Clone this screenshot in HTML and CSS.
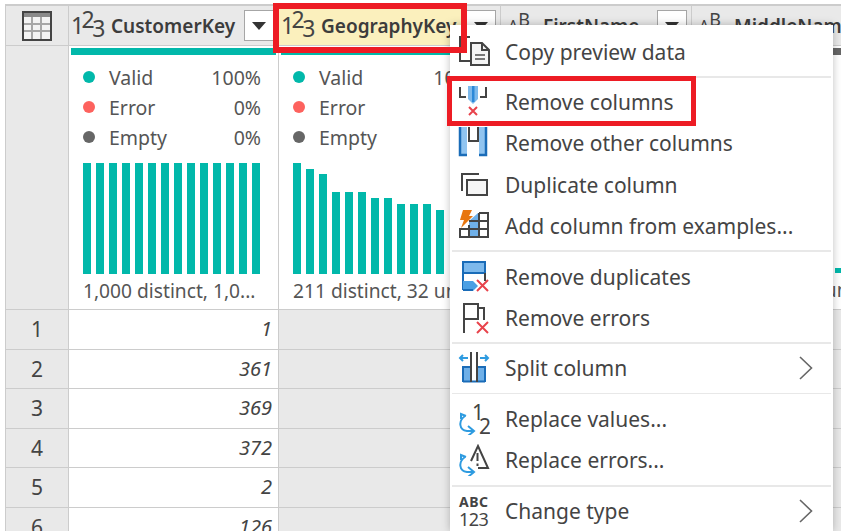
FILE: index.html
```html
<!DOCTYPE html>
<html>
<head>
  <meta charset="utf-8">
  <title>Remove columns</title>
  <link rel="stylesheet" href="styles.css">
</head>
<body>
  <div class="grid">
    <!-- Kopfzeile -->
    <div class="row head">
      <div class="index">
        <svg class="table-icon" width="32" height="32" viewBox="0 0 32 32">
          <rect x="2" y="2" width="28" height="28" fill="#f4f4f4" stroke="#444" stroke-width="2"/>
          <rect x="3" y="3" width="26" height="4" fill="#8a8a8a"/>
          <path d="M3 14H29M3 21H29M11 7V29M20 7V29" stroke="#a8a8a8" stroke-width="2" fill="none"/>
        </svg>
      </div>
      <div class="cell col-a">
        <div class="label"><span class="type">1<sup>2</sup><sub>3</sub></span><span class="name">CustomerKey</span></div>
        <div class="drop"><i></i></div>
      </div>
      <div class="cell col-b">
        <div class="label picked"><span class="type">1<sup>2</sup><sub>3</sub></span><span class="name">GeographyKey</span></div>
        <div class="drop"><i></i></div>
      </div>
      <div class="cell col-c">
        <div class="label"><span class="type letters"><small>A</small><sup>B</sup></span><span class="name">FirstName</span></div>
        <div class="drop"><i></i></div>
      </div>
      <div class="cell col-d">
        <div class="label"><span class="type letters"><small>A</small><sup>B</sup></span><span class="name">MiddleName</span></div>
      </div>
    </div>

    <!-- Profil -->
    <div class="row profile">
      <div class="index"></div>
      <div class="cell col-a">
        <div class="quality"></div>
        <ul class="stats">
          <li><b class="dot valid"></b>Valid<span>100%</span></li>
          <li><b class="dot error"></b>Error<span>0%</span></li>
          <li><b class="dot empty"></b>Empty<span>0%</span></li>
        </ul>
        <div class="bars">
          <i></i><i></i><i></i><i></i><i></i><i></i><i></i><i></i><i></i><i></i><i></i><i></i><i></i><i></i>
        </div>
        <div class="distinct">1,000 distinct, 1,0...</div>
      </div>
      <div class="cell col-b">
        <div class="quality"></div>
        <ul class="stats">
          <li><b class="dot valid"></b>Valid<span>100%</span></li>
          <li><b class="dot error"></b>Error<span>0%</span></li>
          <li><b class="dot empty"></b>Empty<span>0%</span></li>
        </ul>
        <div class="bars">
          <i style="height:111px"></i><i style="height:105px"></i><i style="height:100px"></i><i style="height:82px"></i><i style="height:82px"></i><i style="height:82px"></i><i style="height:76px"></i><i style="height:76px"></i><i style="height:70px"></i><i style="height:70px"></i><i style="height:70px"></i><i style="height:64px"></i>
        </div>
        <div class="distinct">211 distinct, 32 unique</div>
      </div>
      <div class="cell col-c"></div>
      <div class="cell col-d">
        <div class="quality blank"></div>
        <div class="bars tail">
          <i></i><i></i><i></i><i></i><i></i><i></i><i></i><i></i><i></i><i></i><i></i>
        </div>
        <div class="distinct">11 distinct, 3 unique</div>
      </div>
    </div>

    <!-- Daten -->
    <div class="row data"><div class="index">1</div><div class="cell col-a">1</div><div class="cell col-b"></div><div class="cell col-c"></div><div class="cell col-d"></div></div>
    <div class="row data"><div class="index">2</div><div class="cell col-a">361</div><div class="cell col-b"></div><div class="cell col-c"></div><div class="cell col-d"></div></div>
    <div class="row data"><div class="index">3</div><div class="cell col-a">369</div><div class="cell col-b"></div><div class="cell col-c"></div><div class="cell col-d"></div></div>
    <div class="row data"><div class="index">4</div><div class="cell col-a">372</div><div class="cell col-b"></div><div class="cell col-c"></div><div class="cell col-d"></div></div>
    <div class="row data"><div class="index">5</div><div class="cell col-a">2</div><div class="cell col-b"></div><div class="cell col-c"></div><div class="cell col-d"></div></div>
    <div class="row data"><div class="index">6</div><div class="cell col-a">126</div><div class="cell col-b"></div><div class="cell col-c"></div><div class="cell col-d"></div></div>
  </div>

  <!-- Kontextmenue -->
  <div class="menu">
    <div class="item">
      <svg width="32" height="32" viewBox="0 0 32 32" fill="none" stroke="#444" stroke-width="2">
        <path d="M12 1H2V25H12"/>
        <path d="M13 7H24L31 14V29H13Z" fill="#f4f4f4"/>
        <path d="M24 7V14H31"/>
        <path d="M17 19H27M17 23H27" stroke="#777"/>
      </svg>
      Copy preview data
    </div>
    <div class="sep"></div>
    <div class="item">
      <svg width="32" height="32" viewBox="0 0 32 32" fill="none">
        <path d="M2 1V11H8M28 1V11H22" stroke="#444" stroke-width="2"/>
        <path d="M10 0H20V13L15 18L10 13Z" fill="#7db9ec"/>
        <path d="M14 0H16.5V16H14Z" fill="#2b88d8"/>
        <path d="M11 21L19 29M19 21L11 29" stroke="#e8434c" stroke-width="2"/>
      </svg>
      Remove columns
    </div>
    <div class="item">
      <svg width="32" height="32" viewBox="0 0 32 32" fill="none">
        <path d="M1 0H9V29H1Z" fill="#90c4f0"/>
        <path d="M21 0H29V29H21Z" fill="#90c4f0"/>
        <path d="M2 0V28H9M28 0V28H21" stroke="#1a6cb8" stroke-width="2.5"/>
        <path d="M11 0V14H20V0" stroke="#444" stroke-width="2"/>
      </svg>
      Remove other columns
    </div>
    <div class="item">
      <svg width="32" height="32" viewBox="0 0 32 32" fill="none" stroke="#444" stroke-width="2">
        <path d="M21 5H4V22"/>
        <rect x="9" y="11" width="20" height="15" fill="#f6f6f6"/>
      </svg>
      Duplicate column
    </div>
    <div class="item">
      <svg width="32" height="32" viewBox="0 0 32 32" fill="none">
        <path d="M11 11H20V28H11Z" fill="#6fb0e8"/>
        <path d="M20 3V11H11" fill="#6fb0e8"/>
        <path d="M21 3H30V27H2V19H30M30 11H11M11 28V15M21 3V28" stroke="#444" stroke-width="2"/>
        <path d="M5 0H14L11 6H15L3 18L6 10H2Z" fill="#e8760f"/>
      </svg>
      Add column from examples...
    </div>
    <div class="sep"></div>
    <div class="item">
      <svg width="32" height="32" viewBox="0 0 32 32" fill="none">
        <rect x="5" y="1" width="22" height="11" fill="#7db9ec" stroke="#1a6cb8" stroke-width="2"/>
        <path d="M5 12V29" stroke="#1a6cb8" stroke-width="2"/>
        <path d="M27 12V20" stroke="#444" stroke-width="2"/>
        <path d="M5 20H15L20 25L15 30H5Z" fill="#4b9fe3"/>
        <path d="M5 29H15" stroke="#1a6cb8" stroke-width="2"/>
        <path d="M19 19L30 30M30 19L19 30" stroke="#e8434c" stroke-width="2"/>
      </svg>
      Remove duplicates
    </div>
    <div class="item">
      <svg width="32" height="32" viewBox="0 0 32 32" fill="none">
        <path d="M6 31V2H20V17H6M20 6H26V18" stroke="#444" stroke-width="2"/>
        <path d="M19 20L30 31M30 20L19 31" stroke="#e8434c" stroke-width="2"/>
      </svg>
      Remove errors
    </div>
    <div class="sep"></div>
    <div class="item more">
      <svg width="32" height="32" viewBox="0 0 32 32" fill="none">
        <path d="M5 15H13V30H5Z M19 15H27V30H19Z" fill="#6fb0e8"/>
        <path d="M5 30V15H13M27 30V15H19M5 29.5H27" stroke="#1a6cb8" stroke-width="2"/>
        <path d="M13 0V30M19 0V30" stroke="#444" stroke-width="2"/>
        <path d="M10 6H2M5 3L2 6L5 9M22 6H30M27 3L30 6L27 9" stroke="#2e9be0" stroke-width="2"/>
      </svg>
      Split column
      <svg class="chevron" width="14" height="24" viewBox="0 0 14 24" fill="none"><path d="M1 1L12.5 12L1 23" stroke="#666" stroke-width="1.6"/></svg>
    </div>
    <div class="sep thin"></div>
    <div class="item">
      <svg width="32" height="32" viewBox="0 0 32 32" fill="none">
        <text x="14" y="17" class="ico-num">1</text>
        <text x="21" y="31" class="ico-num">2</text>
        <path d="M7 13C0 18 1 27 9 28H15M10 23L16 28L10 33M3 16L3 11L8 13" stroke="#2e9be0" stroke-width="2"/>
      </svg>
      Replace values...
    </div>
    <div class="item">
      <svg width="32" height="32" viewBox="0 0 32 32" fill="none">
        <path d="M13 17L20 2L30 24H20" stroke="#444" stroke-width="2"/>
        <path d="M19.5 9V17M19.5 19.5V22" stroke="#444" stroke-width="2"/>
        <path d="M7 13C0 18 1 27 9 28H15M10 23L16 28L10 33M3 16L3 11L8 13" stroke="#2e9be0" stroke-width="2"/>
      </svg>
      Replace errors...
    </div>
    <div class="sep"></div>
    <div class="item more">
      <svg width="32" height="32" viewBox="0 0 32 32">
        <text x="1" y="12" class="ico-abc">ABC</text>
        <text x="1" y="31" class="ico-123">123</text>
      </svg>
      Change type
      <svg class="chevron" width="14" height="24" viewBox="0 0 14 24" fill="none"><path d="M1 1L12.5 12L1 23" stroke="#666" stroke-width="1.6"/></svg>
    </div>
  </div>

  <!-- Markierungen -->
  <div class="mark mark-col"></div>
  <div class="mark mark-item"></div>
</body>
</html>
```

FILE: styles.css
```css
html, body {
  height: 100%;
  overflow: hidden;
}
body {
  margin: 0;
  background: #ffffff;
  font-family: "Noto Sans", Arial, sans-serif;
  color: #444444;
}

/* Tabelle */
.grid {
  margin: 4px 0 0 5px;
  overflow: hidden;
  border-top: 2px solid #cccccc;
  border-left: 1px solid #cccccc;
}
.row {
  display: flex;
  border-bottom: 1.5px solid #cccccc;
  box-sizing: border-box;
}
.index {
  width: 63px;
  flex: none;
  background: #e9e9e9;
  border-right: 1.5px solid #cccccc;
  box-sizing: border-box;
  display: flex;
  align-items: center;
  justify-content: center;
}
.cell {
  flex: none;
  box-sizing: border-box;
  border-right: 1.5px solid #cccccc;
}
.col-a { width: 210px; }
.col-b { width: 222px; }
.col-c { width: 191px; }
.col-d { width: 210px; border-right: none; }

/* Kopf */
.head {
  height: 40px;
  background: #e9e9e9;
}
.head .cell {
  display: flex;
  align-items: center;
}
.table-icon {
  display: block;
}
.label {
  flex: 1;
  height: 100%;
  min-width: 0;
  display: flex;
  align-items: center;
  overflow: hidden;
  white-space: nowrap;
  padding-left: 2px;
}
.label.picked {
  background: #fbf0bd;
}
.type {
  font-size: 23px;
  letter-spacing: -2.6px;
  width: 40px;
  flex: none;
  color: #444444;
  line-height: 1;
}
.type sup, .type sub {
  font-size: 23px;
  line-height: 0;
}
.type sup { vertical-align: 6px; }
.type sub { vertical-align: -3px; }
.type.letters {
  letter-spacing: 0;
  padding-left: 5px;
  width: 35px;
}
.type.letters small {
  font-size: 16px;
  vertical-align: 2.5px;
}
.type.letters sup {
  font-size: 18px;
  vertical-align: 8px;
}
.name {
  font-size: 19px;
  font-weight: 600;
  color: #3c3c3c;
}
.drop {
  width: 30px;
  height: 31px;
  flex: none;
  margin: 0 4px 0 3px;
  background: #ffffff;
  border: 1px solid #a6a6a6;
  box-sizing: border-box;
  display: flex;
  align-items: center;
  justify-content: center;
}
.drop i {
  border-left: 7px solid transparent;
  border-right: 7px solid transparent;
  border-top: 8px solid #333333;
}

/* Profil */
.profile {
  height: 264px;
  background: #ffffff;
}
.quality {
  height: 7px;
  margin: 2px 2px 0;
  background: #01b8aa;
}
.quality.blank {
  background: #666666;
}
.stats {
  list-style: none;
  margin: 7px 17px 0 14px;
  padding: 0;
  font-size: 19.5px;
}
.stats li {
  height: 30px;
  display: flex;
  align-items: center;
  color: #555555;
}
.stats span {
  margin-left: auto;
}
.dot {
  width: 12px;
  height: 12px;
  border-radius: 50%;
  margin-right: 14px;
}
.dot.valid { background: #01b8aa; }
.dot.error { background: #fd625e; }
.dot.empty { background: #666666; }
.bars {
  height: 111px;
  margin: 10.5px 17px 0 14px;
  display: flex;
  align-items: flex-end;
  gap: 5px;
}
.bars i {
  width: 8px;
  height: 111px;
  flex: none;
  background: #01b8aa;
}
.bars.tail {
  margin: 107px 0 0 13px;
}
.bars.tail i {
  height: 5px;
}
.distinct {
  margin: 3px 0 0 14px;
  font-size: 19.2px;
  line-height: 28px;
  color: #555555;
  white-space: nowrap;
  overflow: hidden;
}

/* Daten */
.data {
  height: 39.5px;
  font-size: 21px;
}
.data .cell {
  background: #e9e9e9;
}
.data .col-a {
  background: #ffffff;
  text-align: right;
  font-style: italic;
  font-size: 20px;
  line-height: 38px;
  padding-right: 6px;
}

/* Menue */
.menu {
  position: absolute;
  left: 450px;
  top: 25px;
  width: 383px;
  height: 506px;
  padding-top: 6px;
  box-sizing: border-box;
  background: #ffffff;
  box-shadow: 0 0 8px rgba(0, 0, 0, 0.25);
}
.item {
  height: 41.2px;
  padding-left: 8px;
  display: flex;
  align-items: center;
  gap: 15px;
  font-size: 21px;
  color: #444444;
  white-space: nowrap;
}
.item svg {
  flex: none;
}
.more .chevron {
  margin-left: auto;
  margin-right: 20px;
}
.sep {
  height: 2px;
  margin: 4px 2px 3.5px;
  background: #e8e8e8;
}
.sep.thin {
  height: 1px;
  margin-bottom: 4.5px;
}
.ico-num {
  font-size: 21px;
  fill: #444444;
}
.ico-abc {
  font-size: 14px;
  font-weight: 700;
  letter-spacing: 0.5px;
  fill: #444444;
}
.ico-123 {
  font-size: 18px;
  letter-spacing: -0.5px;
  fill: #444444;
}

/* rote Rahmen */
.mark {
  position: absolute;
  box-sizing: border-box;
  border: 6px solid #ed1c24;
}
.mark-col {
  left: 273px;
  top: 3px;
  width: 194px;
  height: 50px;
}
.mark-item {
  left: 447px;
  top: 76px;
  width: 249px;
  height: 50px;
  border-width: 5px;
}
```
